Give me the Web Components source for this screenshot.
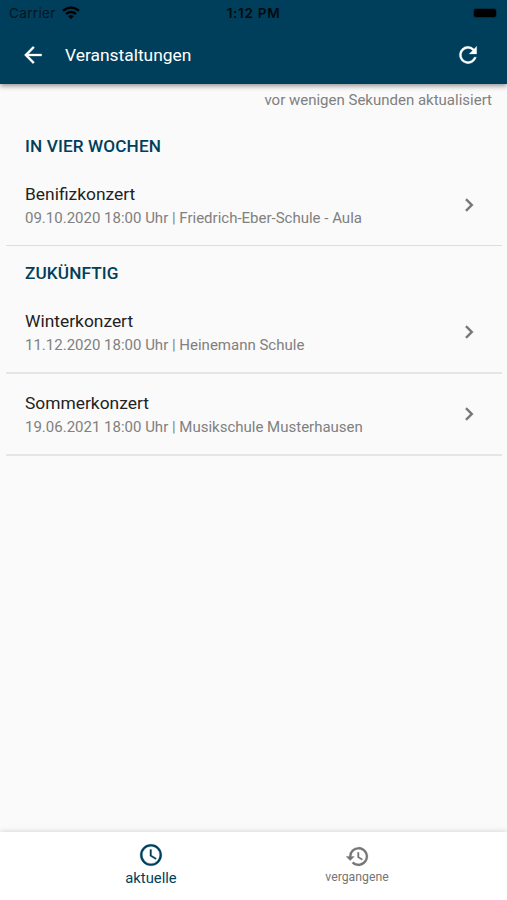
<!DOCTYPE html>
<html lang="de">
<head>
<meta charset="utf-8">
<title>Veranstaltungen</title>
<style>
html,body{margin:0;height:100%;background:#fafafa}
body{font-family:Roboto,"Liberation Sans",sans-serif;overflow:hidden}
</style>
</head>
<body>
<events-app></events-app>
<script>
const define = (name, render) => customElements.define(name, class extends HTMLElement {
  connectedCallback() {
    if (!this.shadowRoot) this.attachShadow({mode: 'open'}).innerHTML = render(this);
  }
});

const icons = {
  back: 'M20 11H7.83l5.59-5.59L12 4l-8 8 8 8 1.41-1.41L7.83 13H20v-2z',
  refresh: 'M17.65 6.35A7.96 7.96 0 0 0 12 4a8 8 0 1 0 7.73 10h-2.08A6 6 0 1 1 12 6c1.66 0 3.14.69 4.22 1.78L13 11h7V4l-2.35 2.35z',
  chevron: 'M10 6L8.59 7.41 13.17 12l-4.58 4.59L10 18l6-6z',
  clock: 'M11.99 2C6.47 2 2 6.48 2 12s4.47 10 9.99 10C17.52 22 22 17.52 22 12S17.52 2 11.99 2zM12 20a8 8 0 1 1 0-16 8 8 0 0 1 0 16zM12.5 7H11v6l5.25 3.15.75-1.23-4.5-2.67z',
  history: 'M13 3a9 9 0 0 0-9 9H1l3.89 3.89.07.14L9 12H6a7 7 0 1 1 2.06 4.94l-1.42 1.42A9 9 0 1 0 13 3zm-1 5v5l4.28 2.54.72-1.21-3.5-2.08V8H12z'
};
define('md-icon', el => `<style>:host{display:block;width:26px;height:26px;flex:none}svg{display:block;width:100%;height:100%;fill:currentColor;stroke:currentColor;stroke-width:.25}</style>
<svg viewBox="0 0 24 24"><path d="${icons[el.getAttribute('name')]}"/></svg>`);

define('status-bar', () => `<style>
:host{display:grid;grid-template-columns:1fr auto 1fr;align-items:center;height:27px;padding:0 9px;color:#06151e;font:13.5px/27px Inter,sans-serif;box-sizing:border-box}
.left{display:flex;align-items:center;gap:6px;letter-spacing:.35px}
.time{font-weight:600;font-size:13.5px;letter-spacing:.7px;color:#020a0f}
.wifi{width:18px;height:13px;margin-bottom:2px}
.battery{justify-self:end;width:24px;height:10px;border-radius:3px;background:#000;border:1px solid #042f43;margin:0 1px 1px 0;box-sizing:border-box}
</style>
<div class="left"><span>Carrier</span><svg class="wifi" viewBox="0 0 18 13"><g fill="none" stroke="#000" stroke-width="2.4"><path d="M1 4.7Q9-1.7 17 4.7M4 8Q9 3.9 14 8"/></g><path d="M6.2 10.2Q9 8 11.8 10.2L9 13z"/></svg></div>
<span class="time">1:12 PM</span><div class="battery"></div>`);

define('app-bar', el => `<style>
:host{display:block;background:#003f5c;height:84px;box-shadow:0 2px 5px rgba(0,0,0,.42);color:#fff;position:relative;z-index:1;flex:none}
.bar{display:flex;align-items:center;height:56px;padding:0 26px 0 20px;box-sizing:border-box}
h1{font-size:17.4px;line-height:20px;font-weight:400;margin:0 auto 1px 19px}
</style><status-bar></status-bar>
<div class="bar"><md-icon name="back"></md-icon><h1>${el.getAttribute('heading')}</h1><md-icon name="refresh"></md-icon></div>`);

define('event-group', el => `<style>
:host{display:block}
h2{margin:0;height:46px;padding:0 19px;font-size:17.2px;line-height:55px;font-weight:500;letter-spacing:.12px;color:#003f5c;box-sizing:border-box}
</style><h2>${el.getAttribute('heading')}</h2><slot></slot>`);

define('event-row', () => `<style>
:host{display:flex;align-items:center;justify-content:space-between;height:82px;padding:0 20px 1px 19px;border-bottom:2px solid #e5e5e5;box-sizing:border-box}
:host([thin]){height:81px;border-bottom:1px solid #dcdcdc}
.text{padding-top:2px}
.name{font-size:17.4px;line-height:24px;color:#222}
.meta{font-size:15px;line-height:24px;color:#808080}
md-icon{color:#757575}
</style><div class="text"><div class="name"><slot name="name"></slot></div><div class="meta"><slot></slot></div></div><md-icon name="chevron"></md-icon>`);

define('nav-tab', el => `<style>
:host{display:flex;flex-direction:column;align-items:center;width:206px;padding-top:12px;color:#757575;font-size:12.25px;line-height:18px;box-sizing:border-box}
md-icon{width:25px;height:25px;margin-bottom:-1px}
:host([active]){color:#003f5c;font-size:14.8px;padding-top:10px}
:host([active]) md-icon{width:26px;height:26px;margin-bottom:1px}
</style><md-icon name="${el.getAttribute('icon')}"></md-icon><slot></slot>`);

define('bottom-nav', () => `<style>
:host{display:flex;justify-content:center;height:68px;padding-left:1px;background:#fff;box-shadow:0 -1px 5px rgba(0,0,0,.13);flex:none}
</style><slot></slot>`);

define('events-app', () => `<style>
:host{display:flex;flex-direction:column;height:900px;background:#fafafa}
main{flex:1;padding:0 5px 0 6px;min-height:0}
.updated{text-align:right;height:35px;line-height:32px;padding-right:10px;font-size:15px;color:#808080}
</style>
<app-bar heading="Veranstaltungen"></app-bar>
<main><div class="updated">vor wenigen Sekunden aktualisiert</div>
<event-group heading="IN VIER WOCHEN">
<event-row thin><span slot="name">Benifizkonzert</span>09.10.2020 18:00 Uhr | Friedrich-Eber-Schule - Aula</event-row>
</event-group>
<event-group heading="ZUKÜNFTIG">
<event-row><span slot="name">Winterkonzert</span>11.12.2020 18:00 Uhr | Heinemann Schule</event-row>
<event-row><span slot="name">Sommerkonzert</span>19.06.2021 18:00 Uhr | Musikschule Musterhausen</event-row>
</event-group></main>
<bottom-nav><nav-tab icon="clock" active>aktuelle</nav-tab><nav-tab icon="history">vergangene</nav-tab></bottom-nav>`);
</script>
</body>
</html>
